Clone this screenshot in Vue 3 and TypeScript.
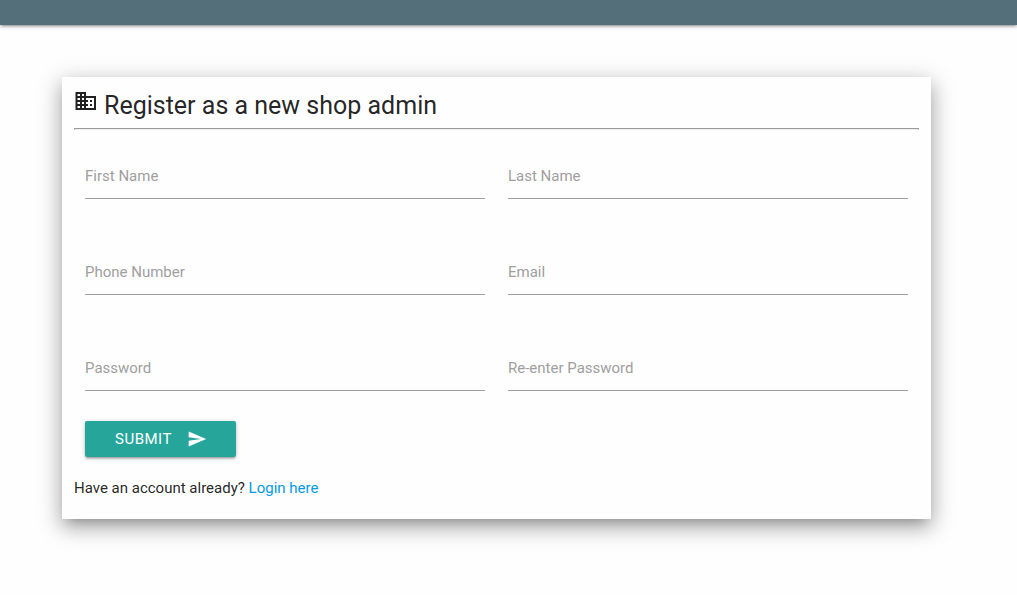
<script setup lang="ts">
import { reactive } from 'vue'

interface Field {
  id: string
  label: string
  type: string
}

const fields: Field[] = [
  { id: 'first-name', label: 'First Name', type: 'text' },
  { id: 'last-name', label: 'Last Name', type: 'text' },
  { id: 'phone', label: 'Phone Number', type: 'tel' },
  { id: 'email', label: 'Email', type: 'email' },
  { id: 'password', label: 'Password', type: 'password' },
  { id: 'password-again', label: 'Re-enter Password', type: 'password' },
]

const values = reactive<Record<string, string>>(
  Object.fromEntries(fields.map((f) => [f.id, ''])),
)
</script>

<template>
  <header class="topbar"></header>
  <main class="page">
    <section class="card">
      <h1 class="title">
        <svg class="title-icon" viewBox="0 0 24 24" aria-hidden="true">
          <path d="M12 7V3H1.5v18H22V7H12zM6 19H3.5v-2H6v2zm0-4H3.5v-2H6v2zm0-4H3.5V9H6v2zm0-4H3.5V5H6v2zm4 12H8v-2h2v2zm0-4H8v-2h2v2zm0-4H8V9h2v2zm0-4H8V5h2v2zm10 12h-8v-2h2v-2h-2v-2h2v-2h-2V9h8v10zm-2-8h-2v2h2v-2zm0 4h-2v2h2v-2z" />
        </svg>
        <span>Register as a new shop admin</span>
      </h1>
      <hr class="rule" />
      <form class="form" @submit.prevent>
        <div class="fields">
          <div v-for="f in fields" :key="f.id" class="field">
            <input :id="f.id" v-model="values[f.id]" class="input" :type="f.type" />
            <label class="label" :class="{ raised: values[f.id] }" :for="f.id">{{ f.label }}</label>
          </div>
        </div>
        <button class="submit" type="submit">
          <span>Submit</span>
          <svg class="send" viewBox="0 0 24 24" aria-hidden="true">
            <path d="M2.01 21L23 12 2.01 3 2 10l15 2-15 2z" />
          </svg>
        </button>
      </form>
      <p class="login">Have an account already? <a href="#login">Login here</a></p>
    </section>
  </main>
</template>

<style>
body {
  background: #fefefe;
}
</style>

<style scoped>
.topbar {
  height: 25px;
  background: #546e7a;
  box-shadow: 0 2px 2px 0 rgba(0, 0, 0, 0.14), 0 3px 1px -2px rgba(0, 0, 0, 0.12),
    0 1px 5px 0 rgba(0, 0, 0, 0.2);
}
.page {
  padding: 52px 86px 76px 62px;
  font-family: Roboto, sans-serif;
  font-size: 15px;
  line-height: 22px;
  color: rgba(0, 0, 0, 0.87);
}
.card {
  padding: 12px 12px 20px;
  background: #fefefe;
  box-shadow: 0 8px 17px 0 rgba(0, 0, 0, 0.2), 0 6px 24px 2px rgba(0, 0, 0, 0.19),
    0 8px 10px -7px rgba(0, 0, 0, 0.2);
}
.title {
  display: flex;
  align-items: flex-start;
  gap: 6px;
  margin: 0;
  font-size: 25px;
  line-height: 33px;
  font-weight: 400;
}
.title-icon {
  width: 24px;
  height: 24px;
  fill: currentColor;
}
.rule {
  height: 0;
  margin: 6px 0 0;
  border: 1px solid #9a9a9a;
  border-bottom-color: #eee;
}
.form {
  padding: 23px 11px 0;
}
.fields {
  display: grid;
  grid-template-columns: 1fr 1fr;
  column-gap: 23px;
  row-gap: 50px;
}
.field {
  position: relative;
}
.input {
  display: block;
  box-sizing: border-box;
  width: 100%;
  height: 46px;
  padding: 0;
  border: 0;
  border-bottom: 1px solid #9e9e9e;
  border-radius: 0;
  outline: none;
  background: transparent;
  font: inherit;
}
.label {
  position: absolute;
  top: 12px;
  left: 0;
  color: #9e9e9e;
  cursor: text;
}
.input:focus {
  border-color: #26a69a;
}
.input:focus + .label,
.raised {
  top: -8px;
  font-size: 12px;
}
.submit {
  display: flex;
  align-items: center;
  gap: 15px;
  height: 36px;
  margin: 30px 0 0;
  padding: 0 29px 0 30px;
  border: 0;
  border-radius: 2px;
  background: #26a69a;
  color: #fff;
  font: inherit;
  text-transform: uppercase;
  letter-spacing: 0.5px;
  cursor: pointer;
  box-shadow: 0 2px 2px 0 rgba(0, 0, 0, 0.14), 0 3px 1px -2px rgba(0, 0, 0, 0.12),
    0 1px 5px 0 rgba(0, 0, 0, 0.2);
}
.send {
  width: 20px;
  height: 20px;
  fill: currentColor;
}
.login {
  margin: 20px 0 0;
}
.login a {
  color: #039be5;
  text-decoration: none;
}
</style>
